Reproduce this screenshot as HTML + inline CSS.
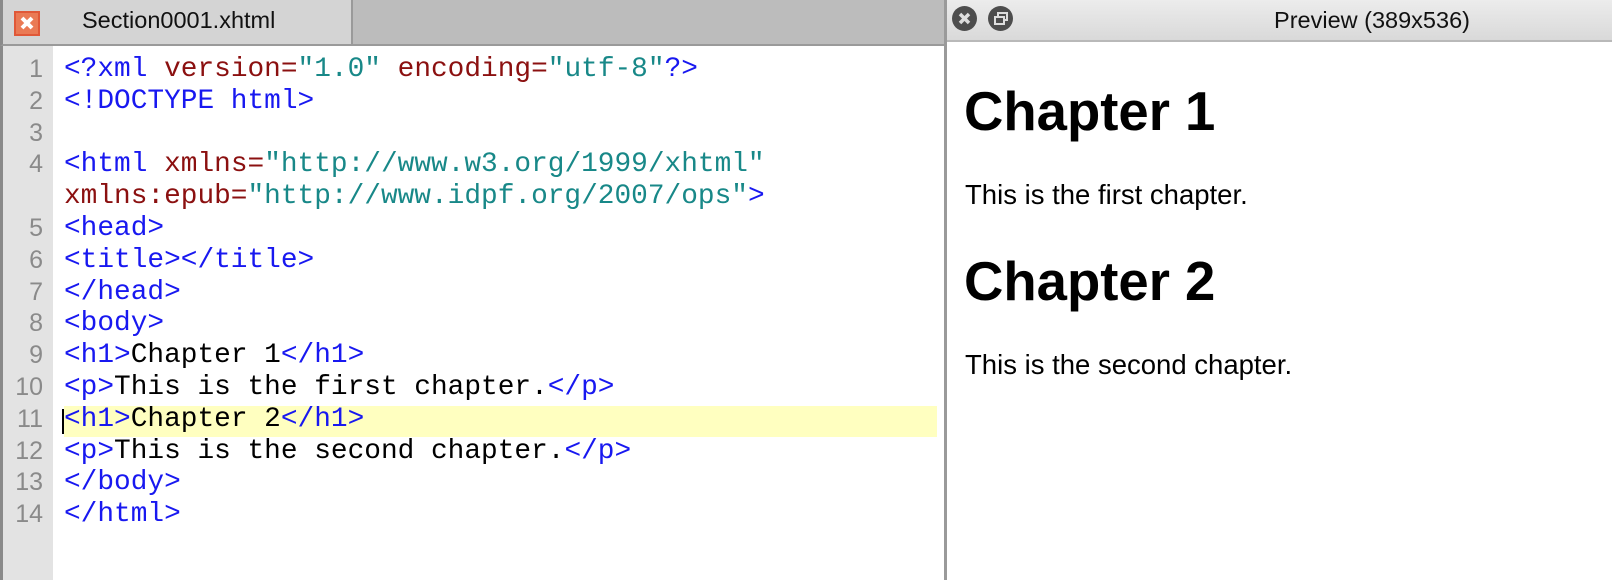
<!DOCTYPE html>
<html><head><meta charset="utf-8"><style>
*{margin:0;padding:0;box-sizing:border-box}
body{width:1612px;height:580px;overflow:hidden;background:#fff;position:relative;font-family:"Liberation Sans",sans-serif}
#tabbar{position:absolute;left:0;top:0;width:944px;height:46px;background:#bcbcbc;border-bottom:2px solid #9a9a9a;border-left:3px solid #8a8a8a}
#tab{position:absolute;left:0;top:0;width:350px;height:44px;background:#d4d4d4;border-right:2px solid #9a9a9a}
#tab .t{position:absolute;left:79px;top:7px;font-size:23.5px;color:#111}
#icon{position:absolute;left:11px;top:11px;width:26px;height:25px;background:#ea7a55;border:2px solid #e05838}
#gutter{position:absolute;left:0;top:46px;width:53px;height:534px;background:#e3e3e3;border-left:3px solid #8a8a8a}
#hl{position:absolute;left:64px;top:406px;width:873px;height:31px;background:#ffffc0}
#caret{position:absolute;left:62px;top:409px;width:2px;height:25px;background:#000}
#nums{position:absolute;left:0;top:54px;width:43px;text-align:right;font-size:25px;color:#8a8a8a;line-height:31.8px}
#code{position:absolute;left:64px;top:54px;font-family:"Liberation Mono",monospace;font-size:27.8px;line-height:31.8px;white-space:pre;color:#000}
.b{color:#1818f0}.r{color:#8b1010}.g{color:#188888}
#div{position:absolute;left:944px;top:0;width:3px;height:580px;background:#9a9a9a}
#hdr{position:absolute;left:947px;top:0;width:665px;height:42px;background:linear-gradient(#ececec,#d9d9d9);border-bottom:2px solid #b9b9b9}
.btn{position:absolute;top:6px;width:25px;height:25px;border-radius:50%;background:#4d4d4d}
#ttl{position:absolute;left:1233px;top:7px;font-size:23.5px;color:#111;width:278px;text-align:center;white-space:nowrap}
h1{position:absolute;left:964px;font-size:54.5px;font-weight:bold;line-height:1;white-space:nowrap}
p{position:absolute;left:965px;font-size:27.5px;line-height:1;white-space:nowrap}
</style></head><body>
<div id="tabbar"><div id="tab"><div id="icon"><svg width="22" height="21" viewBox="0 0 22 21"><path d="M6 5L16 15M16 5L6 15" stroke="#fff" stroke-width="4"/></svg></div><div class="t">Section0001.xhtml</div></div></div>
<div id="gutter"></div>
<div id="hl"></div><div id="caret"></div>
<div id="nums">1<br>2<br>3<br>4<br><br>5<br>6<br>7<br>8<br>9<br>10<br>11<br>12<br>13<br>14</div>
<div id="code"><span class="b">&lt;?xml </span><span class="r">version=</span><span class="g">"1.0"</span> <span class="r">encoding=</span><span class="g">"utf-8"</span><span class="b">?&gt;</span>
<span class="b">&lt;!DOCTYPE html&gt;</span>

<span class="b">&lt;html </span><span class="r">xmlns=</span><span class="g">"http://www.w3.org/1999/xhtml"</span>
<span class="r">xmlns:epub=</span><span class="g">"http://www.idpf.org/2007/ops"</span><span class="b">&gt;</span>
<span class="b">&lt;head&gt;</span>
<span class="b">&lt;title&gt;&lt;/title&gt;</span>
<span class="b">&lt;/head&gt;</span>
<span class="b">&lt;body&gt;</span>
<span class="b">&lt;h1&gt;</span>Chapter 1<span class="b">&lt;/h1&gt;</span>
<span class="b">&lt;p&gt;</span>This is the first chapter.<span class="b">&lt;/p&gt;</span>
<span class="b">&lt;h1&gt;</span>Chapter 2<span class="b">&lt;/h1&gt;</span>
<span class="b">&lt;p&gt;</span>This is the second chapter.<span class="b">&lt;/p&gt;</span>
<span class="b">&lt;/body&gt;</span>
<span class="b">&lt;/html&gt;</span></div>
<div id="div"></div>
<div id="hdr"></div>
<div class="btn" style="left:952px"><svg width="25" height="25"><path d="M8 8L17 17M17 8L8 17" stroke="#ddd" stroke-width="3.5"/></svg></div>
<div class="btn" style="left:988px"><svg width="25" height="25"><rect x="7" y="11" width="9" height="7" fill="none" stroke="#ddd" stroke-width="2"/><path d="M10 11V7H19V14H16" fill="none" stroke="#ddd" stroke-width="2"/></svg></div>
<div id="ttl">Preview (389x536)</div>
<h1 style="top:85px">Chapter 1</h1>
<p style="top:181px">This is the first chapter.</p>
<h1 style="top:255px">Chapter 2</h1>
<p style="top:351px">This is the second chapter.</p>
</body></html>
